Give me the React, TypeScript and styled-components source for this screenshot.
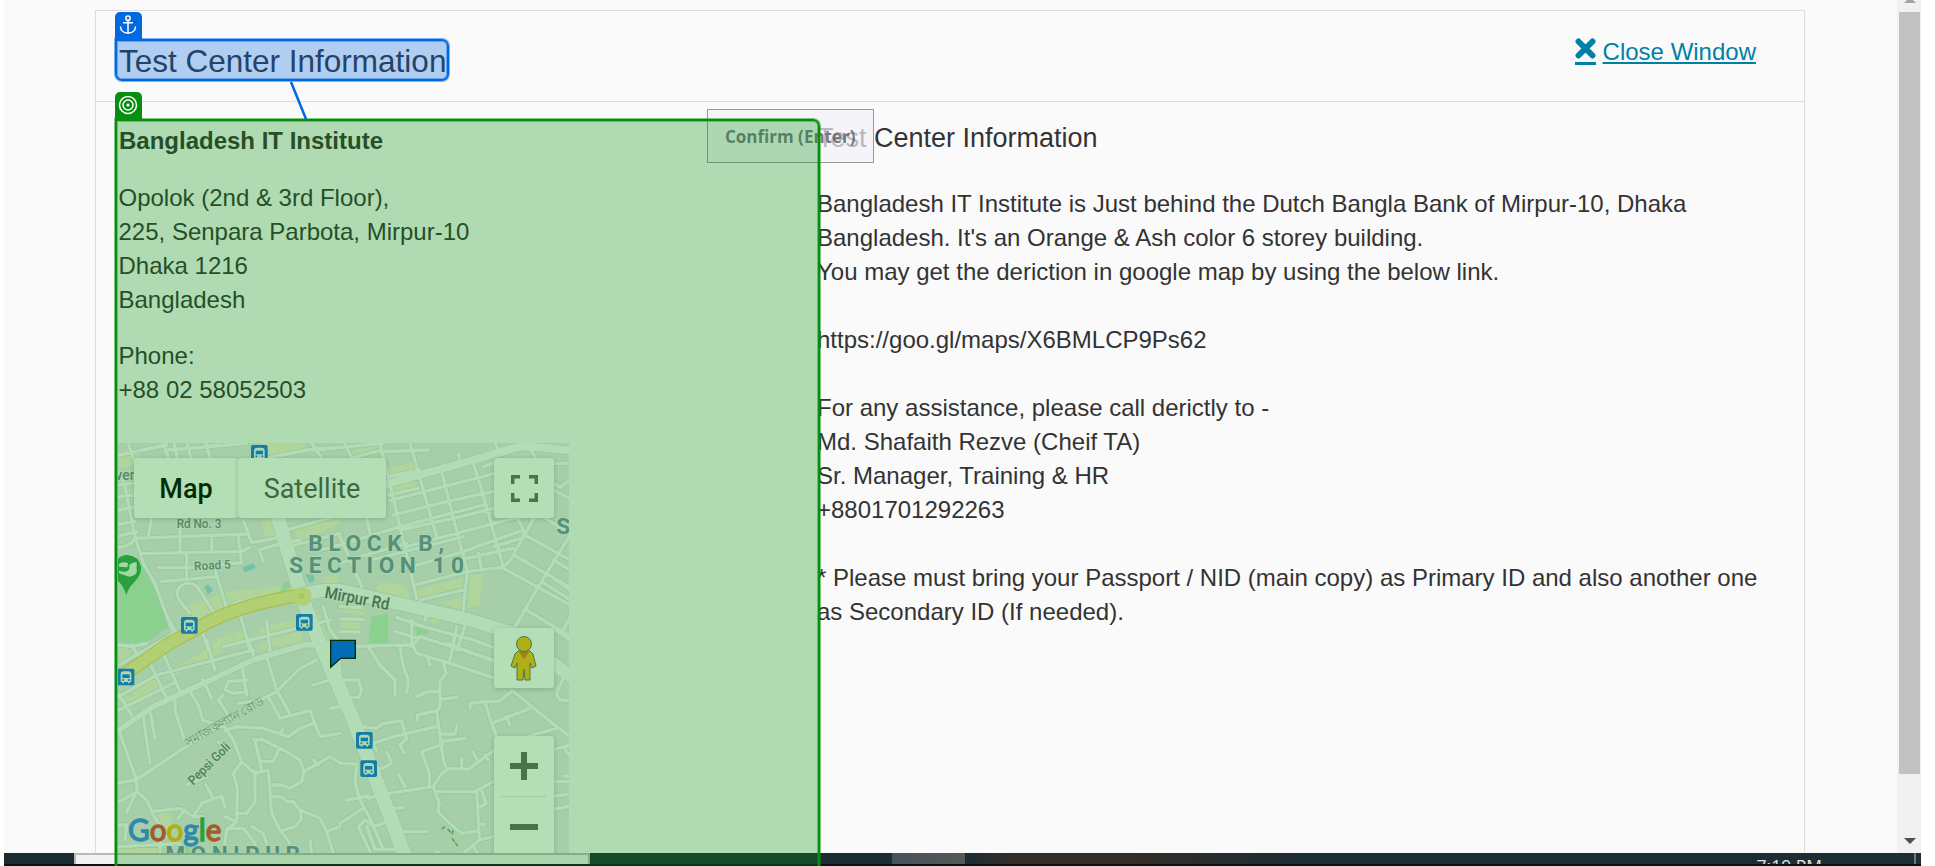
import React from "react";
import styled, { createGlobalStyle } from "styled-components";

const GlobalStyle = createGlobalStyle`
  * { box-sizing: border-box; }
  body { margin: 0; background: #fff; overflow: hidden; }
`;

const Screen = styled.div`
  position: relative;
  width: 1935px;
  height: 866px;
  padding: 0 14px 0 4px;
  overflow: hidden;
  display: flex;
  flex-direction: column;
  background: #fff;
  color: #333;
  font: 24px/34px "Liberation Sans", Arial, sans-serif;
`;

const Viewport = styled.div`
  height: 853px;
  display: flex;
  overflow: hidden;
`;

const Page = styled.div`
  flex: 1;
  height: 853px;
  padding: 10px 92px 0 91px;
  background: #fafafa;
`;

const Panel = styled.main`
  height: 860px;
  border: 1px solid #dcdcdc;
`;

const Header = styled.header`
  height: 91px;
  padding: 0 48px 0 23px;
  border-bottom: 1px solid #dcdcdc;
  display: flex;
  justify-content: space-between;
`;

const Title = styled.h1`
  margin: 30px 0 0;
  font-size: 31.5px;
  line-height: 40px;
  font-weight: 400;
  color: #333;
`;

const CloseLink = styled.a`
  display: flex;
  align-items: flex-start;
  gap: 7px;
  padding-top: 24px;
  color: #0080a6;
`;

const CloseText = styled.span`
  text-decoration: underline;
  text-decoration-thickness: 2px;
  text-underline-offset: 2px;
`;

const CloseIcon = styled.svg`
  width: 21px;
  height: 27px;
  margin-top: 3px;
`;

const Columns = styled.div`
  display: flex;
  padding-left: 22px;
`;

const CenterColumn = styled.section`
  width: 699px;
  padding-top: 22px;
`;

const CenterName = styled.h2`
  margin: 0 0 23px 1px;
  font-size: 24px;
  line-height: 34px;
`;

const Block = styled.p<{ $after: number; $inset?: number }>`
  margin: 0 0 ${(p) => p.$after}px ${(p) => p.$inset ?? 0}px;
  white-space: pre-line;
`;

const DetailsColumn = styled.section`
  flex: 1;
  padding-top: 19px;
`;

const DetailsTitle = styled.h2`
  margin: 0 0 32px;
  font-size: 27px;
  line-height: 34px;
  font-weight: 400;
`;

const MapFrame = styled.div`
  position: relative;
  width: 451px;
  height: 410px;
  overflow: hidden;
  font-family: Roboto, sans-serif;
`;

const MapArt = styled.svg`
  display: block;
  width: 451px;
  height: 410px;
`;

const MapControls = styled.div`
  position: absolute;
  inset: 15px 15px auto 16px;
  display: flex;
  align-items: flex-start;
  justify-content: space-between;
`;

const ControlGroup = styled.div`
  display: flex;
`;

const ControlStack = styled.div`
  display: flex;
  flex-direction: column;
`;

const Control = styled.div<{ $w: number; $h?: number; $active?: boolean; $gap?: number; $label?: boolean }>`
  width: ${(p) => p.$w}px;
  height: ${(p) => p.$h ?? 60}px;
  margin-top: ${(p) => p.$gap ?? 0}px;
  padding-top: ${(p) => (p.$label ? 2 : 0)}px;
  display: flex;
  align-items: center;
  justify-content: center;
  border-radius: 3px;
  background: #fff;
  box-shadow: 0 1px 5px rgba(0, 0, 0, 0.22);
  font-size: 27px;
  font-weight: ${(p) => (p.$active ? 500 : 400)};
  color: ${(p) => (p.$active ? "#000" : "#565656")};
`;

const Scrollbar = styled.div`
  width: 24px;
  height: 853px;
  padding: 0 1px 9px 2px;
  display: flex;
  flex-direction: column;
  align-items: center;
  justify-content: space-between;
  background: #f1f1f1;
`;

const ScrollThumb = styled.div`
  width: 21px;
  height: 762px;
  margin-bottom: 55px;
  background: #c1c1c1;
`;

const ScrollArrow = styled.svg`
  display: block;
  width: 12px;
  flex: none;
`;

const Taskbar = styled.footer`
  height: 13px;
  width: 1917px;
  display: flex;
  overflow: hidden;
  border-bottom: 2px solid #0b1013;
  background: linear-gradient(90deg, #1b2c33 0 961px, #352d28 1010px 1120px, #1c2d34 1300px);
`;

const SearchField = styled.div`
  width: 516px;
  margin-left: 70px;
  border: 2px solid #b9b9b9;
  border-bottom: 0;
  background: #f2f2f2;
`;

const ActiveTask = styled.div`
  width: 73px;
  margin-left: 302px;
  background: linear-gradient(90deg, #47525a, #555957);
`;

const Clock = styled.div`
  margin: 3px 92px 0 auto;
  font: 17.5px/20px "Open Sans", sans-serif;
  color: #e3e6e7;
`;

const DesktopEdge = styled.div`
  width: 2px;
  margin-right: 5px;
  background: #6b777c;
`;

const Highlight = styled.div<{ $tone: "anchor" | "target" }>`
  position: absolute;
  left: 115px;
  top: ${(p) => (p.$tone === "anchor" ? 39 : 119)}px;
  width: ${(p) => (p.$tone === "anchor" ? 334 : 705)}px;
  height: ${(p) => (p.$tone === "anchor" ? 42 : 770)}px;
  border: 2px solid ${(p) => (p.$tone === "anchor" ? "#0068e0" : "#068e0e")};
  border-radius: 0 7px 7px 7px;
  background: ${(p) => (p.$tone === "anchor" ? "rgba(6,107,223,.3)" : "rgba(6,147,13,.3)")};
  background-clip: padding-box;
  box-shadow:
    0 0 0 1px ${(p) => (p.$tone === "anchor" ? "rgba(0,104,224,.5)" : "rgba(6,142,14,.5)")},
    inset 0 0 0 1px ${(p) => (p.$tone === "anchor" ? "rgba(0,104,224,.4)" : "rgba(6,142,14,.4)")};
`;

const Badge = styled.div<{ $tone: "anchor" | "target" }>`
  position: absolute;
  left: 114.5px;
  top: ${(p) => (p.$tone === "anchor" ? 11.5 : 91.5)}px;
  width: 27px;
  height: 27px;
  display: flex;
  align-items: center;
  justify-content: center;
  border-radius: 5px 5px 0 0;
  background: ${(p) => (p.$tone === "anchor" ? "#0068e0" : "#068e0e")};
`;

const Connector = styled.svg`
  position: absolute;
  left: 285px;
  top: 81px;
  width: 30px;
  height: 38px;
`;

const ConfirmHint = styled.div`
  position: absolute;
  left: 707px;
  top: 109px;
  width: 167px;
  height: 54px;
  padding: 1px 0 0 17px;
  border: 1px solid #999;
  background: rgba(242, 241, 248, 0.7);
  color: rgba(80, 80, 90, 0.75);
  font: 700 17px/52px "Open Sans", "Noto Sans", sans-serif;
  white-space: nowrap;
`;

/* Streets are listed as path data in map units, three to a pixel. */
const northWest = [
  "M57 75L200 45", "M85 40L105 100", "M190 40L205 84", "M222 40L232 84", "M262 40L272 84", "M318 40L330 84", "M205 60L440 40", "M290 55L350 45",
  "M57 125L75 170L105 320L130 400L165 460L220 612", "M57 165L100 160M57 200L100 195M57 240L100 232M57 282L105 275M57 318L110 305M57 352Q90 350 105 325",
  "M105 325L440 312", "M125 371L425 364L450 352", "M155 264L145 320", "M240 290V368", "M335 322V368", "M415 318L425 398", "M260 370V448", "M175 413L270 413L425 398",
  "M185 455L350 440", "M345 418L380 535", "M430 270L455 338L540 322", "M490 393L478 360L520 347L600 330", "M340 545L290 468Q265 450 240 470Q222 490 245 520L270 550", "M398 522L432 510",
  "M420 550L450 660", "M305 600L325 660", "M370 650L690 570", "M500 575L510 660", "M220 612L57 705", "M635 40L665 84", "M500 84L620 60L705 52", "M560 300L720 255", "M585 345L720 310", "M205 565L235 620",
  "M670 530L690 600M690 600L720 640",
];
const northEast = [
  "M-80 60L130 40L120 45L145 140L230 505", "M15 40L35 84", "M35 84L125 60", "M210 40L290 320", "M125 65L265 60", "M355 72L362 95", "M465 40L475 60", "M575 65L590 90",
  "M305 125L352 310L382 425L370 540", "M400 100L425 180L445 250L490 412", "M80 264L90 310", "M0 320L65 470", "M-60 360L0 345L180 290L430 225", "M150 212L310 170L430 140L462 130", "M160 255L320 215L470 182", "M180 300L340 265L462 235",
  "M145 140L240 120", "M145 195L235 175", "M95 390L370 320", "M200 350L350 310L540 260", "M215 410L370 365L550 300", "M225 465L380 425L485 412Q510 400 525 365L590 250", "M240 510L370 480", "M0 400L60 380L200 340",
  "M380 385L520 355", "M415 370L425 420", "M460 350L560 320L550 300L525 250", "M430 110L460 100", "M642 100L690 100", "M642 160L660 172L690 150", "M640 180L690 205", "M690 315L595 470L525 592", "M575 270L600 255L690 310", "M550 312L690 390", "M520 375L690 472", "M485 412L690 525", "M640 390L690 420", "M620 430L690 480", "M605 455L690 510", "M560 540L690 620", "M690 560L670 600",
  "M0 530L65 533M0 567L70 568M0 605L62 606", "M170 562L250 590L400 630L480 660", "M255 570L262 550", "M165 605L235 625", "M215 570V650L240 620L460 690", "M375 590L350 660", "M0 650L210 645",
];
const southWest = [
  "M57 15L95 20L140 10", "M95 15L115 48", "M57 170L170 105L460 30", "M57 210L220 130", "M150 70L200 175", "M190 40L240 155", "M320 0L345 90", "M445 0L460 45", "M57 165L95 225",
  "M265 145L295 195L308 240L375 262L400 300L425 365", "M308 118L335 175", "M425 70L440 165M440 120L385 125L375 150L400 160L440 155", "M500 50L530 150L570 222", "M415 190L480 180L530 155L600 85L650 60", "M640 135L690 120L720 110", "M505 170L540 235L630 212L660 290L720 280", "M690 206L720 200",
  "M60 280L108 415L112 455L57 485", "M57 428L108 420L250 325L400 230", "M130 230L150 370", "M152 220L165 295", "M225 170V210L252 298", "M375 272L410 260L490 265L565 290L600 265L640 250", "M540 280L550 265", "M385 225L355 180L370 165", "M110 455L80 515", "M112 455L140 480L160 525L200 590", "M155 515L240 505L280 530L305 490L365 468L375 500", "M318 435L340 475M235 535L255 510M280 530L310 530",
  "M425 365L400 400L412 445L410 545L380 570", "M425 365L465 400L505 390L515 520L540 570L570 610", "M465 395V485L440 520H410", "M375 530L410 545", "M465 300L485 390", "M460 298L490 300L560 335L600 360L612 395L605 425L570 445L545 435H515", "M485 365H520L535 330", "M612 395L690 350L720 368", "M640 360L655 375", "M515 470H545L560 485H580L600 510L605 535L585 560L550 570", "M600 510L660 535L680 575L700 640", "M680 575L720 560", "M630 600L635 640",
  "M380 570L370 640", "M380 565H430L465 610V640", "M455 560L490 580L510 640", "M57 555H80L75 600", "M57 620L240 610", "M180 600V640", "M260 435L320 410M350 350L365 320M355 305L370 320",
];
const southEast = [
  "M85 20L120 75L165 120V165", "M180 20L190 80L205 120L200 158", "M0 120H55L65 150L58 172H20", "M-5 20L0 120", "M215 10L230 40L330 70L450 110L510 130", "M262 50L270 75", "M310 65L318 100L300 125V200L290 215L310 360L320 388", "M228 170L265 155H300", "M300 178L350 172", "M232 240V225L290 212", "M320 10L480 70", "M350 -40L330 60", "M300 282H345L350 258", "M300 305L375 295", "M105 308L160 290L290 260", "M65 260L110 265L125 252L185 242L200 298L180 315L192 338", "M90 300L110 330", "M245 335L310 312", "M245 335L268 400V440",
  "M0 370L50 372L45 430L60 480L95 545L130 630", "M110 388L135 382L155 368L140 335", "M85 475L145 460L280 440L305 400L330 385L385 388L470 325", "M365 388V355", "M398 335L412 360M435 345L445 360", "M175 402L195 440", "M280 440L298 490L293 515L340 560L365 580L410 573", "M290 455H405L450 430L470 420", "M410 450L418 600L460 590", "M425 450L438 490L415 505", "M415 552H435", "M418 600L370 640", "M400 620L415 645",
  "M155 505L188 503", "M190 575H260", "M20 480L85 468", "M0 550L70 505", "M130 550L100 560L75 540L55 560L90 635", "M80 560L105 628H180", "M285 640L295 635",
  "M390 205V190L435 185H475L515 155", "M435 188L455 250L470 290", "M455 250L570 205", "M500 230L510 255", "M515 150L570 195L650 260L690 290", "M560 290L650 265", "M690 0L640 -35", "M655 145L670 115L690 85M655 145L650 165L660 180L690 183", "M642 328L690 315", "M670 320L690 350", "M642 425H690M642 468L690 463M642 508L690 498M670 408H690",
];

const yellowBlocks =
  "57,65 105,55 130,95 57,118|65,182 100,178 95,205 72,205|480,40 600,40 620,55 520,80|575,290 720,250 720,280 600,335|485,275 518,265 525,320 495,320|755,65 838,42 840,65 765,84|865,115 945,95 950,115 872,138|865,172 945,152 948,172 875,195|945,480 1090,445 1088,470 960,508|1020,518 1088,500 1080,540|1110,435 1147,432 1140,525 1102,535|840,455 920,468 930,515 820,490|480,595 600,565 610,590 480,620|485,635 600,605 610,635 480,660|400,605 435,597 440,625 410,635|345,630 395,610 410,650 370,655|720,520 800,535 790,555 720,545|725,575 780,577 780,600 720,595|260,530 380,485 590,465 600,485 360,540 270,590|620,545 650,535 685,620 640,650|85,810 165,750 175,770 95,820|190,730 260,690 320,660 325,690 200,750|95,775 170,732 180,750 105,800|60,790 80,785 100,825 70,830|335,640 370,635 370,660 340,680|400,630 440,630 435,640 410,645|170,1150 210,1150 220,1210 180,1200|57,1250 180,1245 175,1269 57,1269|57,650 75,645 90,670 60,700|675,440 715,430 715,465 660,470|1000,560 1020,570 1010,580 990,575".split("|");
const parks = ["57,445 125,400 165,460 205,560 205,590 150,630 100,642 57,635", "540,485 550,460 570,455 575,470 550,490", "815,560 865,550 865,640 805,640", "945,590 985,595 980,612 950,615", "1155,265 1180,255 1190,268 1165,275", "255,1240 270,1240 270,1270 250,1270"];
const ponds = ["427,412 460,400 467,415 433,427", "313,470 325,463 340,482 323,493", "615,432 640,435 645,450 630,460"];

const Quadrants = () => (
  <>
    <g><path d={northWest.join("")} /></g>
    <g transform="translate(720 0)"><path d={northEast.join("")} /></g>
    <g transform="translate(0 630)"><path d={southWest.join("")} /></g>
    <g transform="translate(720 630)"><path d={southEast.join("")} /></g>
  </>
);

const arterial = "M530 250L603 495L660 640L760 870L920 1290";
const mirpur = "M605 495Q680 470 750 487L1100 567L1240 610L1420 745";
const avenue = "M850 165L1120 90L1250 52Q1270 45 1410 62";
const cross = "M57 900L160 830L460 690L610 645L720 640";
const highway = "M605 495Q430 522 330 574L200 645L90 722L30 758";

const BusStop = ({ x, y }: { x: number; y: number }) => (
  <g transform={`translate(${x} ${y})`}>
    <rect width="50" height="50" rx="5" fill="#1a73e8" />
    <path d="M9 40V17Q9 8 18 8H32Q41 8 41 17V40H36V44H31V40H19V44H14V40Z" fill="#f3f8ff" />
    <path d="M14 17H36V28H14Z" fill="#1a73e8" />
    <circle cx="16" cy="34" r="3" fill="#1a73e8" /><circle cx="34" cy="34" r="3" fill="#1a73e8" />
  </g>
);

const StreetMap = () => (
  <MapArt viewBox="54 39 1353 1230">
    <rect x="54" y="39" width="1353" height="1230" fill="#eae9ed" />
    {yellowBlocks.map((p) => <polygon key={p} points={p} fill="#faf3d8" />)}
    {parks.map((p) => <polygon key={p} points={p} fill="#c6ebc8" />)}
    {ponds.map((p) => <polygon key={p} points={p} fill="#a8d4ee" />)}
    <g fill="none" strokeLinecap="round" strokeLinejoin="round">
      <g stroke="#dcdce0" strokeWidth="15"><Quadrants /></g>
      <g stroke="#dcdce0"><path d={arterial} strokeWidth="47" /><path d={mirpur} strokeWidth="43" /><path d={avenue} strokeWidth="28" /><path d={cross} strokeWidth="22" /></g>
      <g stroke="#fdfdfe" strokeWidth="10"><Quadrants /></g>
      <g stroke="#fdfdfe"><path d={arterial} strokeWidth="42" /><path d={mirpur} strokeWidth="38" /><path d={avenue} strokeWidth="24" /><path d={cross} strokeWidth="17" /></g>
      <path d={highway} stroke="#f5cf63" strokeWidth="41" strokeLinecap="butt" />
      <path d={highway} stroke="#fbeaa0" strokeWidth="34" strokeLinecap="butt" />
    </g>
    <circle cx="606" cy="499" r="29" fill="#fbeaa0" />
    <circle cx="605" cy="498" r="6" fill="none" stroke="#eec95a" strokeWidth="3" />
    <path d="M1025 1198L1038 1187M1043 1197L1056 1211L1060 1200M1056 1225L1073 1248" fill="none" stroke="#58ac62" strokeWidth="4" strokeDasharray="13 4" />
    <path d="M79 495Q70 465 50 450Q30 425 42 400Q60 374 82 375Q118 378 123 412Q124 435 104 455Q85 473 79 495Z" fill="#34a853" />
    <path d="M57 402Q70 392 84 400L82 412L57 410ZM88 405Q98 395 110 397V415Q115 438 88 440L57 430V422Q82 430 88 416Z" fill="#e5f5e8" />
    <BusStop x={453} y={45} /><BusStop x={243} y={561} /><BusStop x={588} y={552} /><BusStop x={53} y={716} /><BusStop x={768} y={906} /><BusStop x={781} y={991} />
    <g fontFamily="Roboto, sans-serif" fill="#7f838c" stroke="#f4f4f6" strokeWidth="6" paintOrder="stroke" fontWeight="500">
      <text x="46" y="150" fontSize="42">ver</text>
      <text x="230" y="293" fontSize="37" textLength="134" lengthAdjust="spacingAndGlyphs">Rd No. 3</text>
      <text x="283" y="421" fontSize="36" textLength="110" lengthAdjust="spacingAndGlyphs" transform="rotate(-3 283 421)">Road 5</text>
      <text x="672" y="503" fontSize="50" textLength="196" lengthAdjust="spacingAndGlyphs" fill="#5f6670" transform="rotate(11 672 503)">Mirpur Rd</text>
      <text x="280" y="1067" fontSize="39" textLength="160" lengthAdjust="spacingAndGlyphs" fill="#70747d" transform="rotate(-45 280 1067)">Pepsi Goli</text>
      <text x="264" y="950" fontSize="36" textLength="264" lengthAdjust="spacingAndGlyphs" fill="#8d9199" strokeWidth="3" fontWeight="400" transform="rotate(-29 264 950)">সমাজকল্যান রোড</text>
      <g fill="#7890ab" fontWeight="700">
        <text x="625" y="362" fontSize="68" textLength="407">BLOCK B,</text>
        <text x="568" y="428" fontSize="68" textLength="524">SECTION 10</text>
        <text x="1369" y="312" fontSize="68">S</text>
        <text x="196" y="1295" fontSize="68" textLength="404">MONIPUR</text>
      </g>
    </g>
    <path d="M692 631H766V685H722L692 712Z" fill="#005cff" stroke="#000" strokeWidth="4" />
    <text x="84" y="1233" fontFamily="Lato, sans-serif" fontSize="94" fontWeight="400" textLength="280" lengthAdjust="spacingAndGlyphs" strokeWidth="4">
      <tspan fill="#4285f4" stroke="#4285f4">G</tspan><tspan fill="#ea4335" stroke="#ea4335">o</tspan><tspan fill="#fbbc05" stroke="#fbbc05">o</tspan><tspan fill="#4285f4" stroke="#4285f4">g</tspan><tspan fill="#34a853" stroke="#34a853">l</tspan><tspan fill="#ea4335" stroke="#ea4335">e</tspan>
    </text>
  </MapArt>
);

const Pegman = () => (
  <svg width="28" height="46" viewBox="0 0 28 46" stroke="#64706b" strokeWidth="1">
    <path d="M8 16H20L23 19L26 31L22 33L20 28V45H15L14 34L13 45H7V28L5 33L1 31L5 19Z" fill="#fbbc1a" />
    <path d="M9 17H19L14 24Z" fill="#d98024" stroke="none" />
    <circle cx="14" cy="9" r="7.5" fill="#fbbc1a" />
  </svg>
);

const App = () => (
  <Screen>
    <GlobalStyle />
    <Viewport>
      <Page>
        <Panel>
          <Header>
            <Title>Test Center Information</Title>
            <CloseLink>
              <CloseIcon viewBox="0 0 21 27">
                <path d="M3.5 3.5L17.5 17.5M17.5 3.5L3.5 17.5" stroke="#0080a6" strokeWidth="6" strokeLinecap="round" />
                <path d="M0 24H21V27H0Z" fill="#0080a6" />
              </CloseIcon>
              <CloseText>Close Window</CloseText>
            </CloseLink>
          </Header>
          <Columns>
            <CenterColumn>
              <CenterName>Bangladesh IT Institute</CenterName>
              <Block $after={22} $inset={0.5}>{"Opolok (2nd & 3rd Floor),\n225, Senpara Parbota, Mirpur-10\nDhaka 1216\nBangladesh"}</Block>
              <Block $after={36} $inset={0.5}>{"Phone:\n+88 02 58052503"}</Block>
              <MapFrame>
                <StreetMap />
                <MapControls>
                  <ControlGroup>
                    <Control $w={104} $active $label>Map</Control>
                    <Control $w={148} $label>Satellite</Control>
                  </ControlGroup>
                  <ControlStack>
                    <Control $w={60}>
                      <svg width="27" height="27" viewBox="0 0 27 27" fill="none" stroke="#666" strokeWidth="3.4">
                        <path d="M1.7 9V1.7H9M18 1.7H25.3V9M25.3 18V25.3H18M9 25.3H1.7V18" />
                      </svg>
                    </Control>
                    <Control $w={60} $gap={110}><Pegman /></Control>
                    <Control $w={60} $h={121} $gap={48}>
                      <svg width="60" height="121" viewBox="0 0 60 121">
                        <path d="M16 30H44M30 16V44M16 91H44" stroke="#666" strokeWidth="6" />
                        <path d="M7 60.5H52" stroke="#e0e0e0" />
                      </svg>
                    </Control>
                  </ControlStack>
                </MapControls>
              </MapFrame>
            </CenterColumn>
            <DetailsColumn>
              <DetailsTitle>Test Center Information</DetailsTitle>
              <Block $after={34}>{"Bangladesh IT Institute is Just behind the Dutch Bangla Bank of Mirpur-10, Dhaka\nBangladesh. It's an Orange & Ash color 6 storey building.\nYou may get the deriction in google map by using the below link."}</Block>
              <Block $after={34}>https://goo.gl/maps/X6BMLCP9Ps62</Block>
              <Block $after={34}>{"For any assistance, please call derictly to -\nMd. Shafaith Rezve (Cheif TA)\nSr. Manager, Training & HR\n+8801701292263"}</Block>
              <Block $after={0}>{"* Please must bring your Passport / NID (main copy) as Primary ID and also another one\nas Secondary ID (If needed)."}</Block>
            </DetailsColumn>
          </Columns>
        </Panel>
      </Page>
      <Scrollbar>
        <ScrollArrow height="3" viewBox="0 0 12 3"><path d="M3 0H9L12 3H0Z" fill="#a3a3a3" /></ScrollArrow>
        <ScrollThumb />
        <ScrollArrow height="6" viewBox="0 0 12 6"><path d="M0 0H12L6 6Z" fill="#505050" /></ScrollArrow>
      </Scrollbar>
    </Viewport>
    <Taskbar>
      <SearchField />
      <ActiveTask />
      <Clock>7:19 PM</Clock>
      <DesktopEdge />
    </Taskbar>
    <ConfirmHint>Confirm (Enter)</ConfirmHint>
    <Highlight $tone="target" />
    <Highlight $tone="anchor" />
    <Connector viewBox="0 0 30 38"><path d="M6 1L21 38" stroke="#0068e0" strokeWidth="2.5" /></Connector>
    <Badge $tone="anchor">
      <svg width="18" height="20" viewBox="0 0 18 20" fill="none" stroke="#fff" strokeWidth="1.5">
        <circle cx="9" cy="3.2" r="2.1" />
        <path d="M9 5.4V18M4 7.7H14M1.4 11.5C1.6 16 5 18.2 9 18.2S16.4 16 16.6 11.5" />
      </svg>
    </Badge>
    <Badge $tone="target">
      <svg width="20" height="20" viewBox="0 0 20 20" fill="none" stroke="#fff" strokeWidth="1.5">
        <circle cx="10" cy="10" r="8.5" /><circle cx="10" cy="10" r="5" /><circle cx="10" cy="10" r="1.6" fill="#fff" stroke="none" />
      </svg>
    </Badge>
  </Screen>
);

export default App;
